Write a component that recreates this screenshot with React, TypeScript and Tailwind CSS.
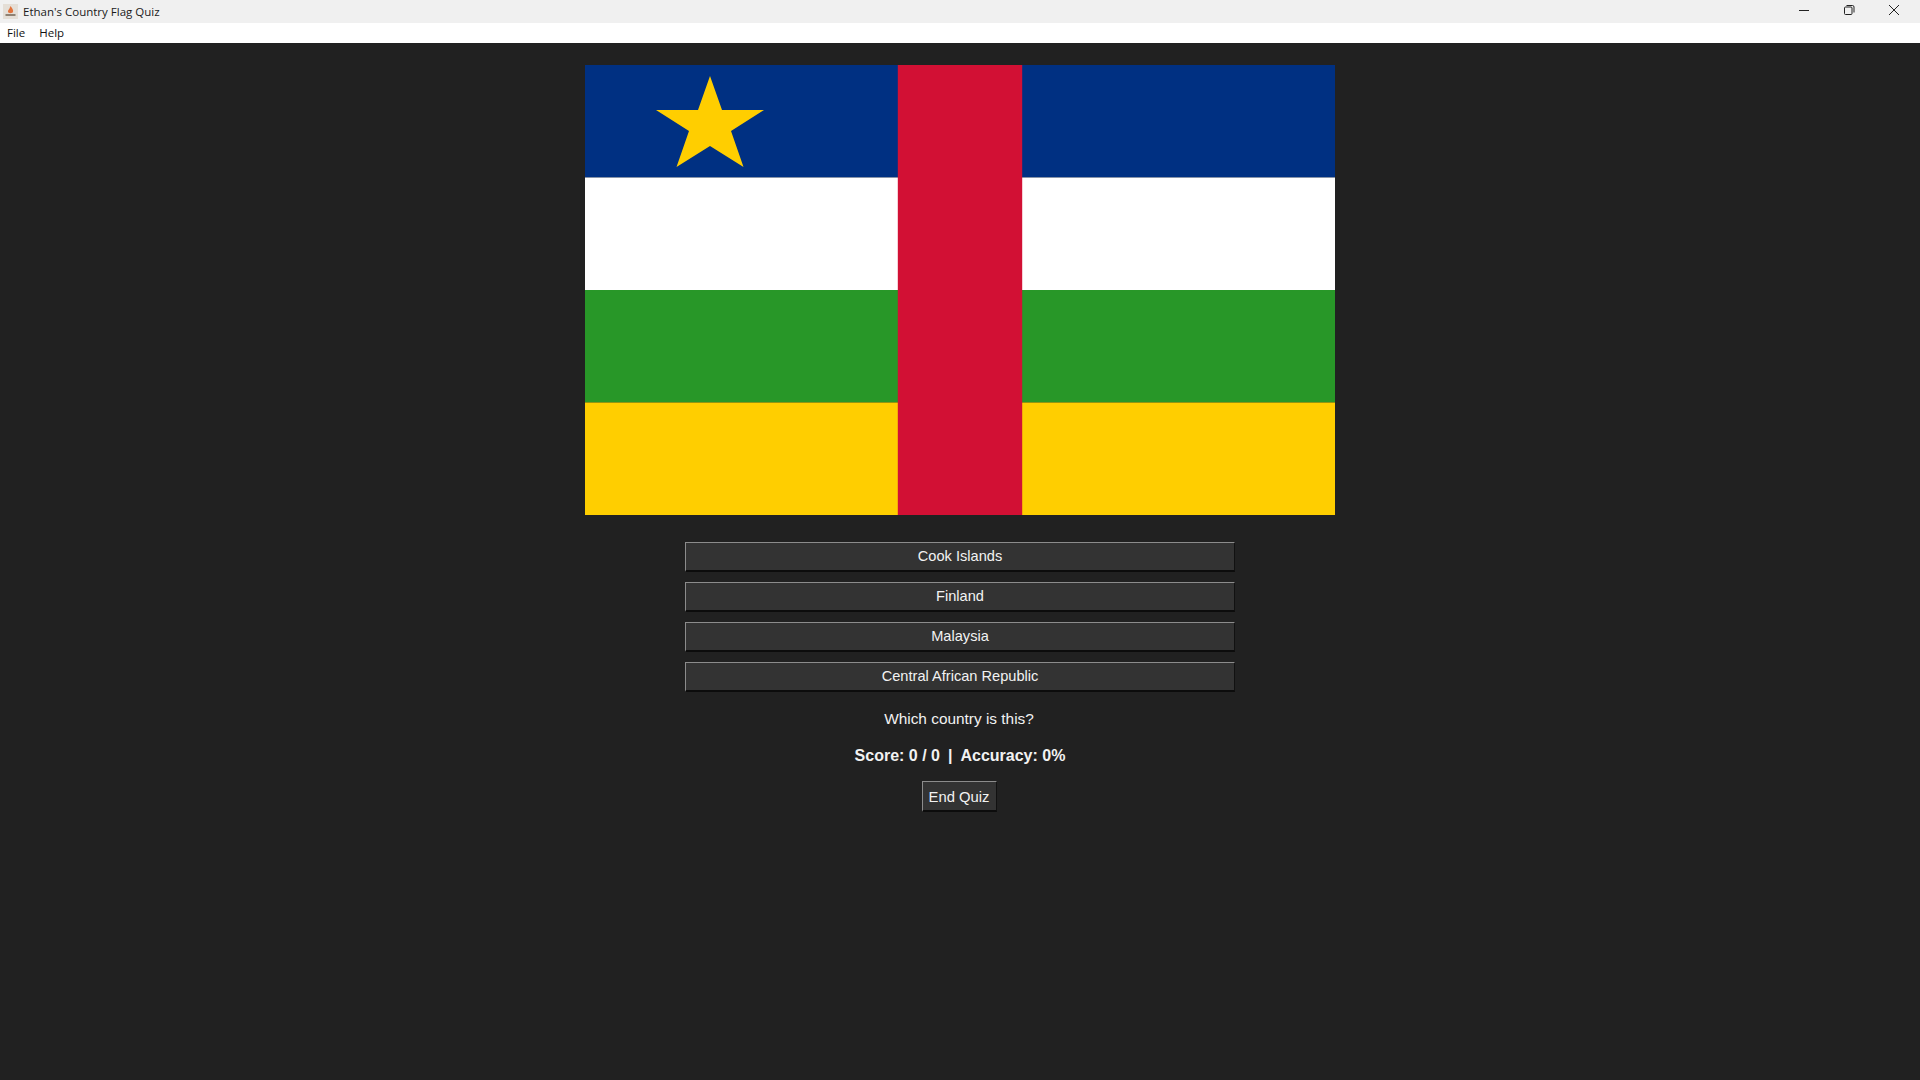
import React from "react";

const font = "font-['Liberation_Sans',Arial,sans-serif]";
const options = ["Cook Islands", "Finland", "Malaysia", "Central African Republic"];

function Bevel({ className, children }: { className: string; children: React.ReactNode }) {
  return (
    <button
      className={`flex items-center justify-center bg-[#333333] border border-t-[#8c8c8c] border-l-[#8c8c8c] border-r-[#111111] border-b-[#0c0c0c] border-b-2 text-[#f2f2f2] ${className}`}
    >
      {children}
    </button>
  );
}

export default function App() {
  return (
    <div className={`w-[1920px] h-[1080px] flex flex-col bg-[#212121] overflow-hidden ${font}`}>
      <div className="h-[23px] bg-[#f0f0f0] flex items-center pl-[3px] font-['Open_Sans',sans-serif]">
        <svg width="15" height="15" viewBox="0 0 15 15" className="mr-[5px]">
          <rect x="0" y="0" width="15" height="15" fill="#e4ded6" />
          <path d="M7.5 2 C9.5 4.5 10.5 6 10 8 C9.5 9.5 5.5 9.5 5 8 C4.7 6.5 6 5.5 6.5 4.5 Z" fill="#e2733c" />
          <rect x="2.5" y="10" width="10" height="2" fill="#8f8172" />
        </svg>
        <span className="text-[11.5px] text-[#1a1a1a]">Ethan's Country Flag Quiz</span>
        <div className="ml-auto mr-[4px] mb-[3px] flex items-center h-full">
          <div className="w-[45px] h-full flex items-center justify-center">
            <svg width="12" height="12" viewBox="0 0 12 12"><path d="M1 6.5H11" stroke="#222" strokeWidth="1" /></svg>
          </div>
          <div className="w-[45px] h-full flex items-center justify-center">
            <svg width="12" height="12" viewBox="0 0 12 12" fill="none" stroke="#222"><rect x="1.5" y="3" width="7.5" height="7.5" rx="1" /><path d="M3.5 1.5H9.5A1.5 1.5 0 0 1 11 3V8.5" /></svg>
          </div>
          <div className="w-[45px] h-full flex items-center justify-center">
            <svg width="12" height="12" viewBox="0 0 12 12" stroke="#222"><path d="M1 1L11 11M11 1L1 11" /></svg>
          </div>
        </div>
      </div>
      <div className="h-[20px] bg-white flex items-center pl-[7px] gap-[14px] text-[11.5px] text-[#111111] font-['Open_Sans',sans-serif]">
        <span>File</span>
        <span>Help</span>
      </div>
      <div className="flex-1 flex flex-col items-center pt-[22px]">
        <svg width="750" height="450" viewBox="0 0 750 450" className="block">
          <rect width="750" height="112.5" y="0" fill="#003082" />
          <rect width="750" height="112.5" y="112.5" fill="#ffffff" />
          <rect width="750" height="112.5" y="225" fill="#289728" />
          <rect width="750" height="112.5" y="337.5" fill="#ffce00" />
          <rect x="312.8" width="124.4" height="450" fill="#d21034" />
          <polygon points="125,11 137,45 179,45 146,66 158.5,102 125,81 91.5,102 104,66 71,45 113,45" fill="#ffce00" />
        </svg>
        <div className="mt-[27px] flex flex-col gap-[10px]">
          {options.map((o) => (
            <Bevel key={o} className="w-[550px] h-[30px] text-[14.6px] pt-[1px]">{o}</Bevel>
          ))}
        </div>
        <p className="mt-[18px] -translate-x-px text-[15.4px] text-[#f2f2f2] leading-[18px]">Which country is this?</p>
        <p className="mt-[19px] text-[16px] font-bold text-[#f2f2f2] leading-[18px]">
          Score: 0 / 0<span className="mx-[8px]">|</span>Accuracy: 0%
        </p>
        <Bevel className="mt-[16px] -translate-x-px w-[75px] h-[31px] text-[14.8px] pt-[2px]">End Quiz</Bevel>
      </div>
    </div>
  );
}
